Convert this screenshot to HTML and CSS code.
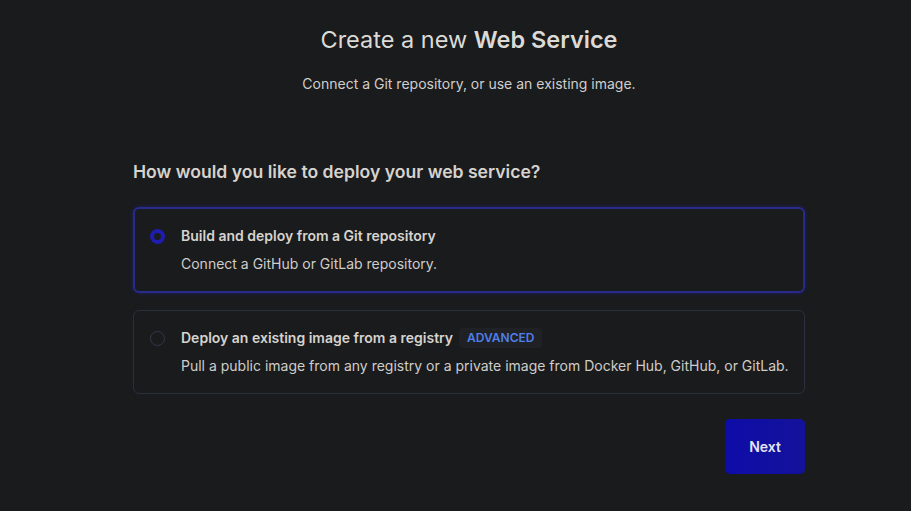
FILE: index.html
```html
<!DOCTYPE html>
<html>
<head>
<meta charset="utf-8">
<link rel="stylesheet" href="styles.css">
</head>
<body>
<main class="page">
  <header class="head">
    <h1 class="title">Create a new <strong>Web Service</strong></h1>
    <p class="sub">Connect a Git repository, or use an existing image.</p>
  </header>
  <section class="form">
    <h2 class="question">How would you like to deploy your web service?</h2>
    <div class="options">
      <label class="option selected">
        <span class="radio"></span>
        <span class="text">
          <span class="opt-title">Build and deploy from a Git repository</span>
          <span class="opt-desc">Connect a GitHub or GitLab repository.</span>
        </span>
      </label>
      <label class="option">
        <span class="radio"></span>
        <span class="text">
          <span class="opt-title">Deploy an existing image from a registry <span class="badge">ADVANCED</span></span>
          <span class="opt-desc">Pull a public image from any registry or a private image from Docker Hub, GitHub, or GitLab.</span>
        </span>
      </label>
    </div>
    <div class="actions">
      <button class="next">Next</button>
    </div>
  </section>
</main>
</body>
</html>
```
FILE: styles.css
```css
* { box-sizing: border-box; }
html, body { margin: 0; padding: 0; }
body {
  background: #1a1b1d;
  color: #d6d4d0;
  font-family: Inter, "Noto Sans", sans-serif;
  width: 911px;
  height: 511px;
  overflow: hidden;
}
.page {
  display: flex;
  flex-direction: column;
  align-items: center;
  padding-top: 24px;
  padding-left: 27px;
}
.head { text-align: center; }
.title {
  margin: 0;
  font-size: 23.5px;
  font-weight: 400;
  line-height: 32px;
  color: #dcdad6;
}
.title strong { font-weight: 600; }
.sub {
  margin: 18px 0 0;
  font-size: 14px;
  line-height: 20px;
  color: #d0cecb;
}
.form {
  width: 672px;
  margin-top: 66px;
}
.question {
  margin: 0;
  font-size: 17.6px;
  font-weight: 600;
  line-height: 24px;
  color: #d6d3ce;
}
.options {
  display: flex;
  flex-direction: column;
  gap: 17px;
  margin-top: 23px;
}
.option {
  display: flex;
  align-items: flex-start;
  gap: 16px;
  padding: 17px 6px 17px 16px;
  border: 1px solid #2a2f3e;
  border-radius: 6px;
}
.option.selected {
  border: 2px solid #282b8c;
  padding: 17px 5px 17px 15px;
  box-shadow: 0 0 4px rgba(40, 40, 180, 0.5);
}
.radio {
  width: 15px;
  height: 15px;
  border-radius: 50%;
  border: 1px solid #323849;
  margin-top: 3px;
  flex: none;
}
.option.selected .radio {
  border: 4px solid #1f1cb0;
  background: #1a1b1d;
}
.text {
  display: flex;
  flex-direction: column;
  gap: 8px;
  flex: 1;
  min-width: 0;
}
.opt-title {
  font-size: 14px;
  font-weight: 600;
  line-height: 20px;
  color: #d6d3ce;
  display: flex;
  align-items: center;
}
.opt-desc {
  font-size: 14px;
  line-height: 20px;
  color: #cfcdc9;
  white-space: nowrap;
}
.badge {
  margin-left: 6px;
  font-size: 12px;
  font-weight: 600;
  color: #4f7fe8;
  background: #202125;
  padding: 2px 8px;
  border-radius: 4px;
  line-height: 16px;
}
.actions {
  display: flex;
  justify-content: flex-end;
  margin-top: 25px;
}
.next {
  width: 80px;
  height: 55px;
  border: none;
  border-radius: 5px;
  background: linear-gradient(90deg, #0e0ca8, #14129a);
  color: #e4e3f0;
  font-family: Inter, "Noto Sans", sans-serif;
  font-size: 14px;
  font-weight: 600;
}
```
